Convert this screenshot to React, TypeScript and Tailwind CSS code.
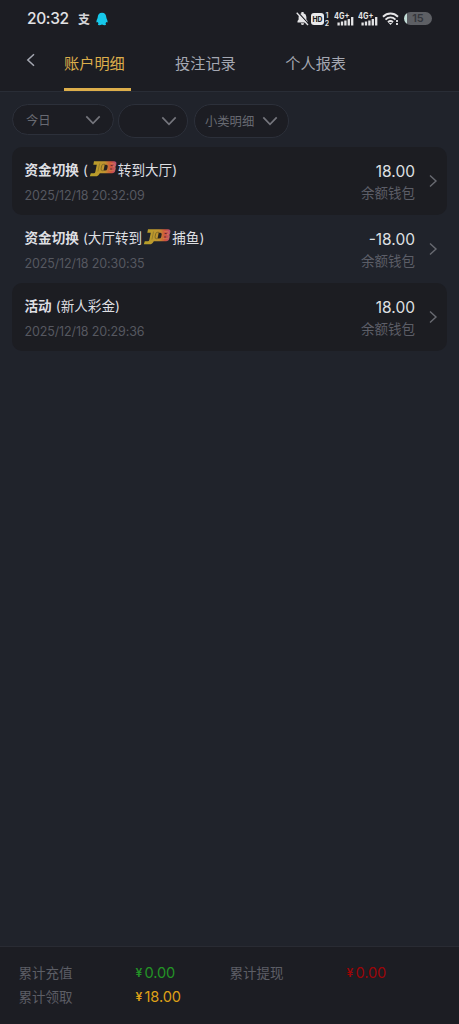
import clsx from "clsx";

type Entry = {
  id: number;
  type: string;
  before?: string;
  logo?: boolean;
  after: string;
  time: string;
  amount: string;
};

const entries: Entry[] = [
  { id: 1, type: "资金切换", before: "(", logo: true, after: "转到大厅)", time: "2025/12/18 20:32:09", amount: "18.00" },
  { id: 2, type: "资金切换", before: "(大厅转到", logo: true, after: "捕鱼)", time: "2025/12/18 20:30:35", amount: "-18.00" },
  { id: 3, type: "活动", after: "(新人彩金)", time: "2025/12/18 20:29:36", amount: "18.00" },
];

function SignalIcon() {
  return (
    <svg width="20" height="16" viewBox="0 0 20 16" className="shrink-0">
      <text x="0" y="7.5" fontSize="8.5" fontWeight="700" fill="#e4e4e6" textLength="15.5" lengthAdjust="spacingAndGlyphs">
        4G+
      </text>
      <path d="M4.6 11.5v3M8 10.5v4M11.4 9.5v5M14.8 8v6.5M18.2 6v8.5" stroke="#e4e4e6" strokeWidth="2.3" />
    </svg>
  );
}

function StatusBar() {
  return (
    <div className="flex h-[37px] items-center px-[27px]">
      <span className="w-[42px] text-[15.5px] font-medium leading-none tracking-[-0.35px] text-[#e2e2e5]">20:32</span>
      <span className="ml-[9px] w-3 font-['Noto_Sans_CJK_SC'] text-[12px] font-bold leading-none text-[#d4d4d7]">支</span>
      <svg width="12" height="14" viewBox="0 0 12 14" className="ml-[6px]">
        <path
          d="M6 .7C3.2.7 1.9 2.5 1.7 5.200c0 1.200-1.300 2.700-1.300 4.600 0 .9.6.9 1.300.2.2.6.5 1 .9 1.300-.9.5-.9 1.900.6 1.900 1.100 0 2-.2 2.800-.6.8.4 1.700.6 2.800.6 1.500 0 1.500-1.400.6-1.900.4-.3.7-.7.9-1.300.7.7 1.300.7 1.300-.2 0-1.900-1.300-3.400-1.300-4.600C10.100 2.500 8.800.7 6 .7Z"
          fill="#16c8ea"
        />
      </svg>
      <div className="ml-auto flex items-center">
        <svg width="13" height="15" viewBox="0 0 13 15">
          <path d="M1.500 11.500V10l1.100-1.500V6a4 4 0 0 1 2.800-3.700V1h2.200v1.300A4 4 0 0 1 10.400 6v2.500l1.100 1.500v1.500ZM4.800 12.200h3.400a1.700 1.700 0 0 1-3.400 0Z" fill="#e4e4e6" />
          <path d="m1.700 1 11 12" stroke="#1c1d24" strokeWidth="1.200" />
          <path d="m.7 1.700 11.300 12.300" stroke="#e4e4e6" strokeWidth="1.300" />
        </svg>
        <svg width="18" height="14" viewBox="0 0 18 14" className="ml-[2px]">
          <rect x="0" y="1" width="13" height="12" rx="3" fill="#e9e9eb" />
          <text x="1.5" y="9.7" fontSize="7.5" fontWeight="800" fill="#1c1d24" textLength="10" lengthAdjust="spacingAndGlyphs">
            HD
          </text>
          <text x="14.5" y="6" fontSize="7" fontWeight="600" fill="#e4e4e6">1</text>
          <text x="13.8" y="13.5" fontSize="7" fontWeight="600" fill="#e4e4e6">2</text>
        </svg>
        <div className="ml-[5px] flex gap-[4px]">
          <SignalIcon />
          <SignalIcon />
        </div>
        <svg width="18" height="14" viewBox="0 0 18 14" className="ml-[4px]" fill="none" stroke="#e4e4e6" strokeWidth="1.9">
          <path d="M1 4.700c4.400-4.200 10.600-4.200 15 0M3.500 7.600c3-2.800 7-2.800 10 0M6 10.200c1.500-1.400 3.500-1.400 5 0" />
          <path d="m6.700 11 1.800 2 1.800-2Z" fill="#e4e4e6" stroke="none" />
          <path d="M15 8v2M15 11v2" strokeWidth="1.800" />
        </svg>
        <div className="ml-[4px] flex h-[13px] w-[28px] items-center justify-center overflow-hidden rounded-full bg-[linear-gradient(90deg,#c4ded8_0_3px,#5d5f64_3px)] text-[11px] font-semibold leading-none text-[#34363c]">
          15
        </div>
      </div>
    </div>
  );
}

function ProviderLogo({ id }: { id: number }) {
  return (
    <svg width="28" height="17" viewBox="0 0 28 17" className="relative -top-[2px] left-px shrink-0">
      <defs>
        <linearGradient id={`gold-${id}`} gradientUnits="userSpaceOnUse" x1="1" y1="0" x2="28" y2="0">
          <stop offset="0" stopColor="#b5a028" />
          <stop offset=".55" stopColor="#c19430" />
          <stop offset=".78" stopColor="#d0523d" />
          <stop offset="1" stopColor="#b04f80" />
        </linearGradient>
      </defs>
      {/* J with its hook, then the joined C and B */}
      <path
        d="M5 1.200h20q2.700 0 2.400 2.600l-.4 2.200-1 1.200.6 1.300-.3 2q-.5 2.700-3.200 2.700H10.800Q9.500 16.300 6.500 16.300H.8l1-3h3q1.200 0 1.500-1.300l1.500-7.300H4.300Z"
        fill={`url(#gold-${id})`}
      />
      <path d="m10.600 3.500-1.700 8" stroke="#84702a" strokeWidth=".7" />
      <path d="M16 4.300h-1.600q-1.400 0-1.700 1.500l-.6 3q-.3 1.900 1.300 1.900h1" fill="none" stroke="#806b25" strokeWidth="1" />
      <path d="M15.700 4.800h1.500q1.800 0 1.500 1.800l-.5 2.300q-.3 1.700-2.200 1.700h-1.500Z" fill="#252320" />
      <path d="M21.300 3.500h3.400q1 0 .8 1l-.3 1.300q-.3 1-1.300 1h2q.5 0 .4 1l-.4 1.500q-.3 1.300-1.400 1.300H20" fill="none" stroke="#d69a55" strokeOpacity=".6" strokeWidth=".7" />
      <path d="M21.700 5.500h1.900M21.100 9h2" stroke="#61302f" strokeWidth="1.200" />
    </svg>
  );
}

function ChevronDown() {
  return (
    <svg width="16" height="10" viewBox="0 0 16 10" fill="none" className="shrink-0">
      <path d="m1.300 1.300 6.700 7 6.700-7" stroke="#74757c" strokeWidth="1.700" />
    </svg>
  );
}

function Filter({ label, className }: { label?: string; className: string }) {
  return (
    <button className={clsx("flex items-center rounded-full border border-[#2c303a] bg-[#1c1d23] text-[12.3px] text-[#686a72]", className)}>
      <span className="pt-[3px]">{label}</span>
      <span className="ml-auto">
        <ChevronDown />
      </span>
    </button>
  );
}

function EntryRow({ entry, dark }: { entry: Entry; dark: boolean }) {
  return (
    <div className={clsx("flex h-[68px] rounded-[10px] pl-[12.5px] pr-[9px]", dark && "bg-[#1c1d22]")}>
      <div className="pt-[13px]">
        <div className="flex h-5 items-center whitespace-nowrap text-[13.6px] leading-5 text-[#dedfe2]">
          <span className="mr-[4px] font-bold">{entry.type}</span>
          {entry.before && <span>{entry.before}</span>}
          {entry.logo && <ProviderLogo id={entry.id} />}
          <span className={clsx(entry.logo && "ml-[2px]")}>{entry.after}</span>
        </div>
        <div className="mt-[7px] text-[12.5px] leading-[18px] tracking-[-0.13px] text-[#565860]">{entry.time}</div>
      </div>
      <div className="ml-auto pt-[15px] text-right">
        <div className="text-[15.5px] leading-5 text-[#dfe0e3]">{entry.amount}</div>
        <div className="mt-[1px] text-[13.5px] leading-5 text-[#5c5e67]">余额钱包</div>
      </div>
      <svg width="9" height="14" viewBox="0 0 9 14" fill="none" className="ml-[14px] mt-[27px]">
        <path d="m1 1.500 6 5.500-6 5.500" stroke="#686a71" strokeWidth="1.400" />
      </svg>
    </div>
  );
}

function Total({ label, value, color }: { label: string; value: string; color: string }) {
  return (
    <>
      <span>{label}</span>
      <span className={clsx("flex items-center gap-[1px]", color)}>
        <span className="w-[8px] text-[12px] font-semibold">¥</span>
        <span className="text-[14.6px] tracking-[-0.1px]">{value}</span>
      </span>
    </>
  );
}

export default function App() {
  return (
    <div className="flex h-screen w-full flex-col overflow-hidden bg-[#20232b] font-['Inter','Noto_Sans_CJK_SC',sans-serif]">
      <header className="h-[92px] border-b border-[#292d36] bg-[#1c1d23]">
        <StatusBar />
        <nav className="flex h-[54px] text-[15.2px] text-[#a5a8b2]">
          <svg width="9" height="14" viewBox="0 0 9 14" fill="none" className="ml-[26px] mt-[16px]">
            <path d="M8 1.200 1.800 7 8 12.800" stroke="#a5a8b2" strokeWidth="1.500" />
          </svg>
          <div className="ml-[29px] flex w-[67px] flex-col border-b-[3px] border-[#dcae4b] pt-[15px] leading-6 text-[#dcae4b]">账户明细</div>
          <div className="ml-[44px] pt-[15px] leading-6">投注记录</div>
          <div className="ml-[49.5px] pt-[15px] leading-6">个人报表</div>
        </nav>
      </header>

      <div className="flex h-[55px] items-start pl-[12px] pt-[12px]">
        <Filter label="今日" className="h-[31px] w-[102px] pl-[13px] pr-[12px]" />
        <Filter className="ml-[4px] h-[34px] w-[70px] pr-[10px]" />
        <Filter label="小类明细" className="ml-[6px] h-[34px] w-[95px] pl-[10px] pr-[10px]" />
      </div>

      <main className="flex-1 px-[12px]">
        {entries.map((entry, i) => (
          <EntryRow key={entry.id} entry={entry} dark={i % 2 === 0} />
        ))}
      </main>

      {/* Totals */}
      <footer className="grid h-[78px] grid-cols-[117px_94px_117px_1fr] content-start border-t border-[#292b33] bg-[#1c1d23] pl-[18.5px] pt-[14px] text-[13.5px] leading-6 text-[#5c5e66]">
        <Total label="累计充值" value="0.00" color="text-[#239326]" />
        <Total label="累计提现" value="0.00" color="text-[#9b0508]" />
        <Total label="累计领取" value="18.00" color="text-[#dea017]" />
      </footer>
    </div>
  );
}
